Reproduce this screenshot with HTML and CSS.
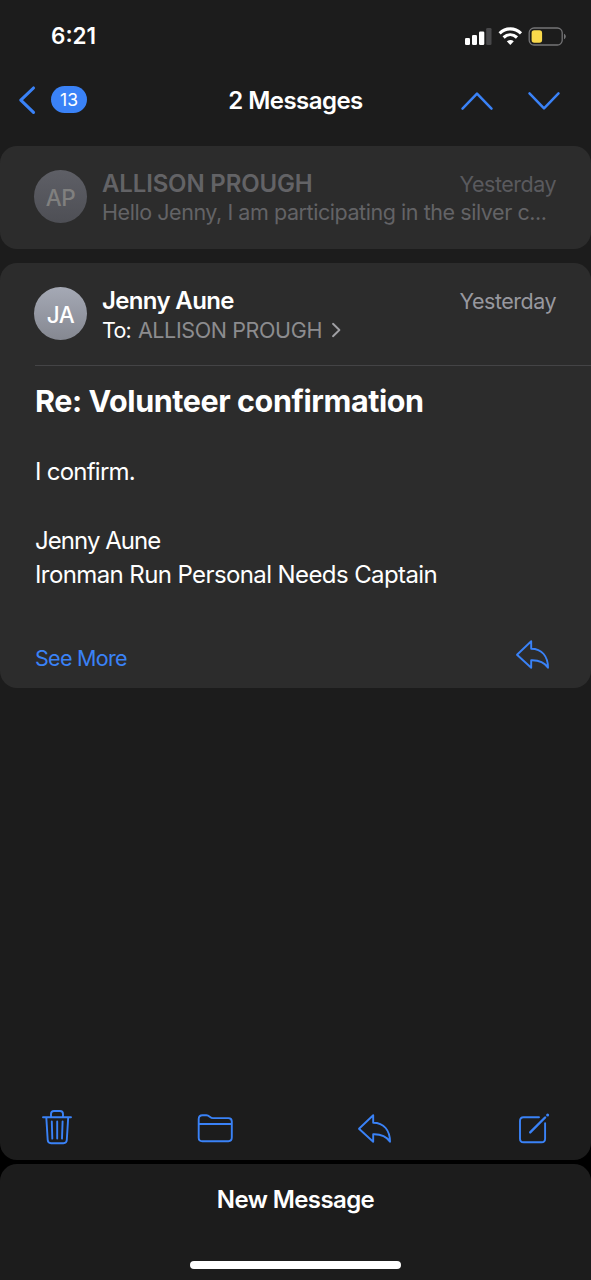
FILE: index.html
```html
<!DOCTYPE html>
<html lang="en">
<head>
<meta charset="utf-8">
<title>2 Messages</title>
<link rel="stylesheet" href="styles.css">
</head>
<body>
<svg class="defs" width="0" height="0" aria-hidden="true">
  <symbol id="reply" viewBox="0 0 36 32">
    <path d="M2 15.8 L16.2 2.2 V9.7 C27 9.7 33 17.5 33 28.7 C29.2 23.2 24.5 21 16.2 21.3 V28.8 Z"/>
  </symbol>
</svg>
<div class="phone">
  <main class="sheet">
    <header class="status">
      <span class="time">6:21</span>
      <svg class="indicators" width="104" height="22" viewBox="0 0 104 22">
        <g fill="#fff">
          <rect x="2" y="13" width="5" height="7" rx="1.3"/>
          <rect x="9" y="10" width="5" height="10" rx="1.3"/>
          <rect x="16" y="6.5" width="5.3" height="13.5" rx="1.3"/>
          <rect x="23.2" y="3" width="5.3" height="17" rx="1.3" fill="#48484a"/>
        </g>
        <g fill="none" stroke="#fff" stroke-width="3.1">
          <path d="M36.6 8.3 C42.8 2.4 51.8 2.4 58 8.3"/>
          <path d="M40.6 12.5 C44.6 8.8 50 8.8 54 12.5"/>
        </g>
        <path d="M47.3 20 L43.8 16.3 C45.9 14.5 48.7 14.5 50.8 16.3 Z" fill="#fff"/>
        <rect x="66.2" y="3" width="33" height="17" rx="4.8" fill="none" stroke="#747476" stroke-width="1.3"/>
        <rect x="68.6" y="5.3" width="10.5" height="12.4" rx="2.6" fill="#f9d94b"/>
        <path d="M101 8.8 C103.4 9.8 103.4 13.2 101 14.2 Z" fill="#747476"/>
      </svg>
    </header>
    <nav class="nav">
      <div class="back">
        <svg class="line heavy" width="18" height="30" viewBox="0 0 18 30"><path d="M15.5 3 L2.8 15.2 L15.5 27.4"/></svg>
        <span class="badge">13</span>
      </div>
      <h1 class="title">2 Messages</h1>
      <div class="arrows">
        <svg class="line" width="34" height="20" viewBox="0 0 34 20"><path d="M2.5 17.6 L17 2.6 L31.5 17.6"/></svg>
        <svg class="line" width="34" height="20" viewBox="0 0 34 20"><path d="M2.5 2.4 L17 17.4 L31.5 2.4"/></svg>
      </div>
    </nav>
    <article class="card collapsed">
      <div class="avatar dim">AP</div>
      <div class="info">
        <div class="row"><span class="name upper">ALLISON PROUGH</span><time class="date">Yesterday</time></div>
        <p class="preview">Hello Jenny, I am participating in the silver c...</p>
      </div>
    </article>
    <article class="card open">
      <div class="head">
        <div class="avatar">JA</div>
        <div class="info">
          <div class="row"><span class="name">Jenny Aune</span><time class="date">Yesterday</time></div>
          <p class="recipient"><span class="to">To:</span><span class="person">ALLISON PROUGH</span>
            <svg class="disclosure" width="11" height="18" viewBox="0 0 11 18"><path d="M2 2.8 L8.4 9 L2 15.2"/></svg></p>
        </div>
      </div>
      <h2 class="subject">Re: Volunteer confirmation</h2>
      <div class="body">
        <p class="confirm">I confirm.</p>
        <p class="signature">Jenny Aune</p>
        <p class="role">Ironman Run Personal Needs Captain</p>
      </div>
      <footer class="actions">
        <span class="more">See More</span>
        <svg class="line thin" width="36" height="32"><use href="#reply"/></svg>
      </footer>
    </article>
    <div class="toolbar">
      <svg class="line thin trash" width="32" height="38" viewBox="0 0 32 38">
        <path d="M2 9.2 H30 M10 9 V6 Q10 3 13 3 H19 Q22 3 22 6 V9 M5.3 9.4 L6.7 32 Q6.9 35.2 10 35.2 H22.5 Q25.6 35.2 25.8 32 L27.2 9.4"/>
        <path d="M10.8 13.4 L11.3 30.6 M16.2 13.4 V30.6 M21.6 13.4 L21 30.6"/>
      </svg>
      <svg class="line thin" width="38" height="32" viewBox="0 0 38 32">
        <path d="M2.7 25.8 V7 Q2.7 3.2 6.5 3.2 H10.5 C13.5 3.2 14 6.1 17 6.1 H32.5 Q35.8 6.1 35.8 9.6 V25.6 Q35.8 29.2 32.4 29.2 H6.3 Q2.7 29.2 2.7 25.8 Z M2.7 12 H35.8"/>
      </svg>
      <svg class="line thin lower" width="36" height="32"><use href="#reply"/></svg>
      <svg class="line thin" width="34" height="34" viewBox="0 0 34 34">
        <path d="M22 6.2 H6.5 Q3 6.2 3 9.7 V27.8 Q3 31.3 6.5 31.3 H24.6 Q28.1 31.3 28.1 27.8 V12.3"/>
        <path d="M13.2 21.4 L28.1 6.5" stroke-width="2.4"/>
        <circle cx="30.6" cy="4" r="1.5" fill="#3a82f7" stroke="none"/>
      </svg>
    </div>
  </main>
  <section class="draft">
    <span class="draft-title">New Message</span>
    <span class="home"></span>
  </section>
</div>
</body>
</html>
```
FILE: styles.css
```css
* { box-sizing: border-box; margin: 0; padding: 0; }
body { background: #000; font-family: Inter, "Liberation Sans", sans-serif; color: #fff; }
.defs { display: block; }
.phone { width: 591px; height: 1280px; display: flex; flex-direction: column; gap: 3.5px; overflow: hidden; white-space: nowrap; }
.sheet { height: 1160px; background: #1c1c1c; border-radius: 0 0 17px 17px; display: flex; flex-direction: column; }
.status { height: 71px; padding: 0 24px 0 51px; display: flex; justify-content: space-between; align-items: center; }
.time { font-size: 22.5px; font-weight: 600; }
.line { display: block; fill: none; stroke: #3a82f7; stroke-width: 2.5; stroke-linecap: round; stroke-linejoin: round; }
.heavy { stroke-width: 3.1; }
.thin { stroke-width: 1.9; }
.nav { height: 58px; margin-bottom: 17px; padding: 0 30px; display: grid; grid-template-columns: 1fr auto 1fr; align-items: center; }
.back { display: flex; align-items: center; gap: 15px; margin-left: -12px; }
.badge { width: 36px; height: 27px; margin-top: -1px; border-radius: 14px; background: #3a82f7; font-size: 17.5px; line-height: 27px; text-align: center; }
.title { font-size: 24px; font-weight: 600; line-height: 30px; letter-spacing: -0.55px; padding-top: 1px; }
.arrows { display: flex; gap: 32.5px; justify-content: flex-end; margin: 2px 0.5px 0 0; }
.card { background: #2c2c2c; border-radius: 17px; }
.collapsed { height: 102.5px; margin-bottom: 14.5px; padding: 24px 35px 0 34px; display: flex; gap: 15px; color: #636366; }
.avatar { flex: none; width: 53px; height: 53px; border-radius: 50%; background: linear-gradient(#a5a9b5, #858891); font-size: 22.5px; font-weight: 500; line-height: 56px; letter-spacing: -0.4px; text-align: center; }
.dim { background: linear-gradient(#5e5f66, #4e4f55); color: #80807f; }
.info { flex: 1; min-width: 0; }
.row { height: 27px; display: flex; justify-content: space-between; }
.name { font-size: 24px; font-weight: 600; line-height: 28px; letter-spacing: -0.65px; }
.upper { letter-spacing: -0.15px; }
.date { font-size: 21.5px; line-height: 28px; letter-spacing: -0.5px; color: #98989f; }
.collapsed .date { color: #5a5a5e; }
.preview { font-size: 21.5px; line-height: 31px; letter-spacing: -0.44px; color: #636366; }
.open { height: 425px; padding-left: 35px; }
.head { height: 103px; padding: 24px 35px 0 0; border-bottom: 1px solid #444446; display: flex; gap: 15px; }
.head .avatar { margin-left: -1px; }
.recipient { display: flex; align-items: center; font-size: 21.5px; line-height: 32px; letter-spacing: -0.38px; }
.to { margin-right: 7px; letter-spacing: -0.8px; }
.person { color: #8c8c8f; }
.disclosure { margin-left: 8.5px; fill: none; stroke: #a0a0a4; stroke-width: 1.9; stroke-linecap: round; stroke-linejoin: round; }
.subject { font-size: 30.5px; line-height: 69px; font-weight: 700; letter-spacing: -0.42px; }
.body { height: 188px; padding-top: 20px; font-size: 24px; line-height: 34.4px; letter-spacing: -0.6px; }
.confirm { letter-spacing: -0.75px; }
.signature { margin-top: 34.4px; letter-spacing: -0.95px; }
.actions { height: 64px; padding-right: 40px; display: flex; justify-content: space-between; align-items: flex-start; }
.actions svg { margin-top: 16px; }
.more { font-size: 21.5px; line-height: 70px; letter-spacing: -0.7px; color: #3a82f7; }
.toolbar { margin-top: auto; height: 65px; padding: 0 40px 0 41px; display: flex; justify-content: space-between; align-items: center; }
.trash { margin-bottom: 1px; }
.lower { margin: 2px 1px 0 -1px; }
.draft { flex: 1; border-radius: 17px 17px 0 0; background: #1c1c1c; display: flex; flex-direction: column; align-items: center; justify-content: space-between; padding-bottom: 11px; }
.draft-title { font-size: 24px; font-weight: 600; line-height: 72px; letter-spacing: -0.6px; }
.home { width: 211px; height: 8px; border-radius: 4px; background: #fff; }
```
